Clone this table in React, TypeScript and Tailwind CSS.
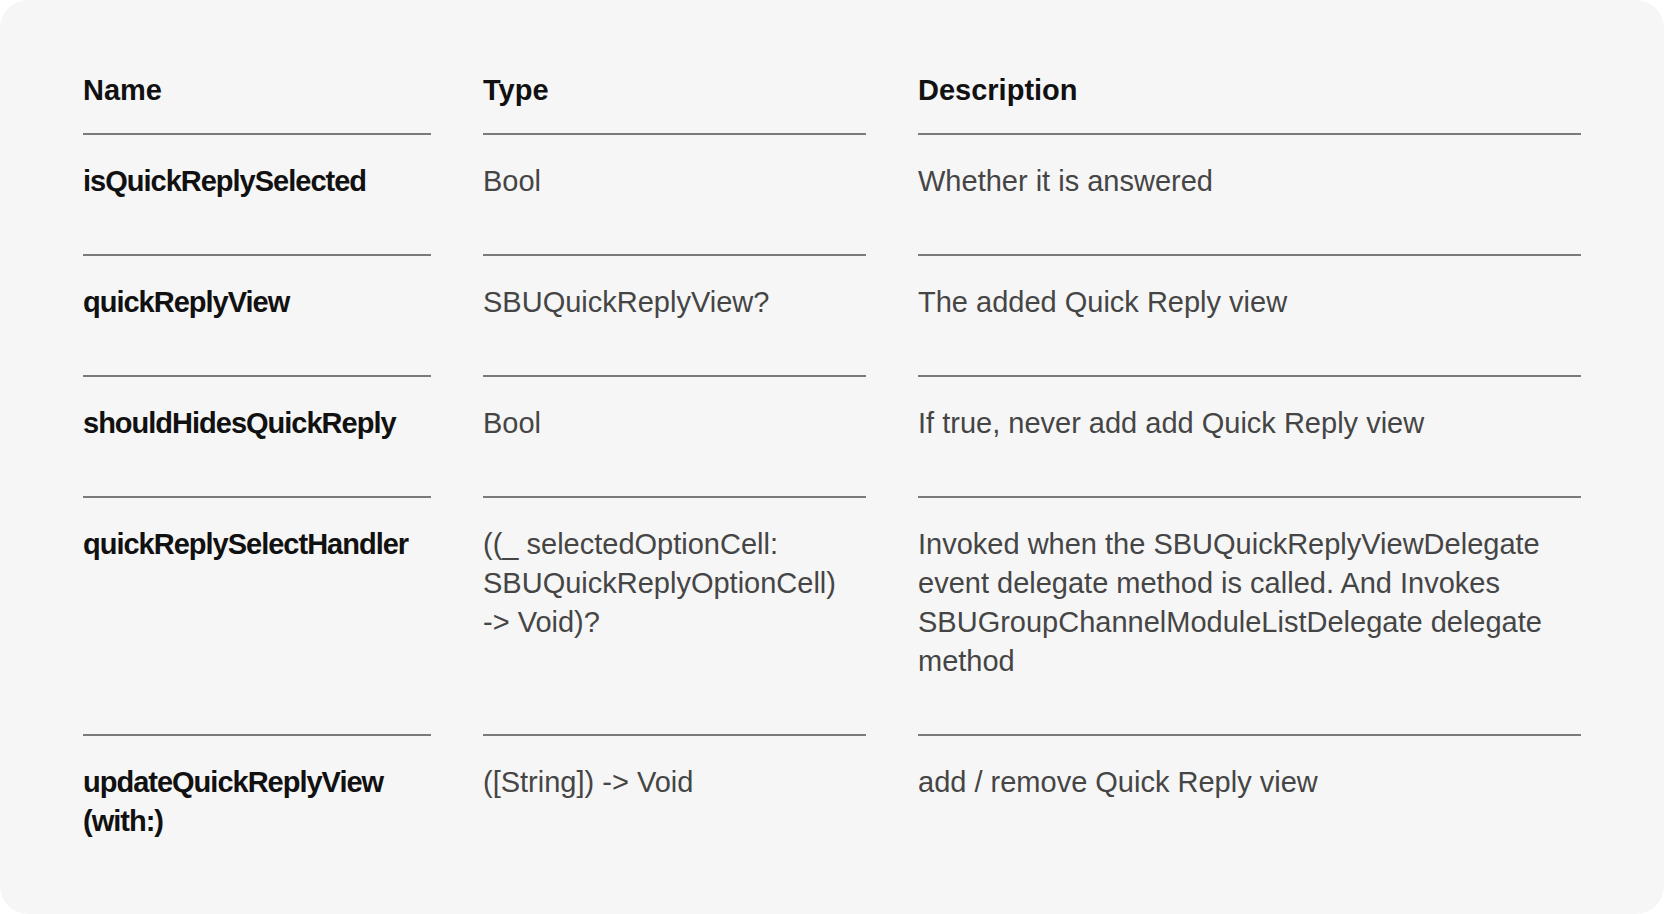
import { ReactNode } from 'react';

interface Row {
  name: string;
  type: ReactNode;
  description: string;
}

const rows: Row[] = [
  {
    name: 'isQuickReplySelected',
    type: 'Bool',
    description: 'Whether it is answered',
  },
  {
    name: 'quickReplyView',
    type: 'SBUQuickReplyView?',
    description: 'The added Quick Reply view',
  },
  {
    name: 'shouldHidesQuickReply',
    type: 'Bool',
    description: 'If true, never add add Quick Reply view',
  },
  {
    name: 'quickReplySelectHandler',
    type: (
      <>
        ((_ selectedOptionCell: SBUQuickReplyOptionCell){' '}
        <span className="whitespace-nowrap">-&gt; Void)?</span>
      </>
    ),
    description:
      'Invoked when the SBUQuickReplyViewDelegate event delegate method is called. And Invokes SBUGroupChannelModuleListDelegate delegate method',
  },
  {
    name: 'updateQuickReplyView (with:)',
    type: <span className="whitespace-nowrap">([String]) -&gt; Void</span>,
    description: 'add / remove Quick Reply view',
  },
];

const App = () => {
  return (
    <div className="min-h-screen w-full bg-white font-['Liberation_Sans',Arial,sans-serif]">
      <div className="min-h-[914px] rounded-[28px] bg-[#f6f6f6] px-[83px] pt-[71px] pb-[20px]">
        <div className="grid grid-cols-[348px_383px_1fr] gap-x-[52px] text-[29px] leading-[39px]">
          <div className="pb-[23px] font-bold text-[#111111]">Name</div>
          <div className="pb-[23px] font-bold text-[#111111]">Type</div>
          <div className="pb-[23px] font-bold text-[#111111]">Description</div>

          {rows.map((row) => (
            <div key={row.name} className="contents">
              <div className="border-t-2 border-[#7a7a7a] pt-[27px] pb-[53px] font-bold tracking-[-1px] text-[#111111]">
                {row.name}
              </div>
              <div className="border-t-2 border-[#7a7a7a] pt-[27px] pb-[53px] text-[#454545]">
                {row.type}
              </div>
              <div className="border-t-2 border-[#7a7a7a] pt-[27px] pb-[53px] text-[#454545]">
                {row.description}
              </div>
            </div>
          ))}
        </div>
      </div>
    </div>
  );
};

export default App;
